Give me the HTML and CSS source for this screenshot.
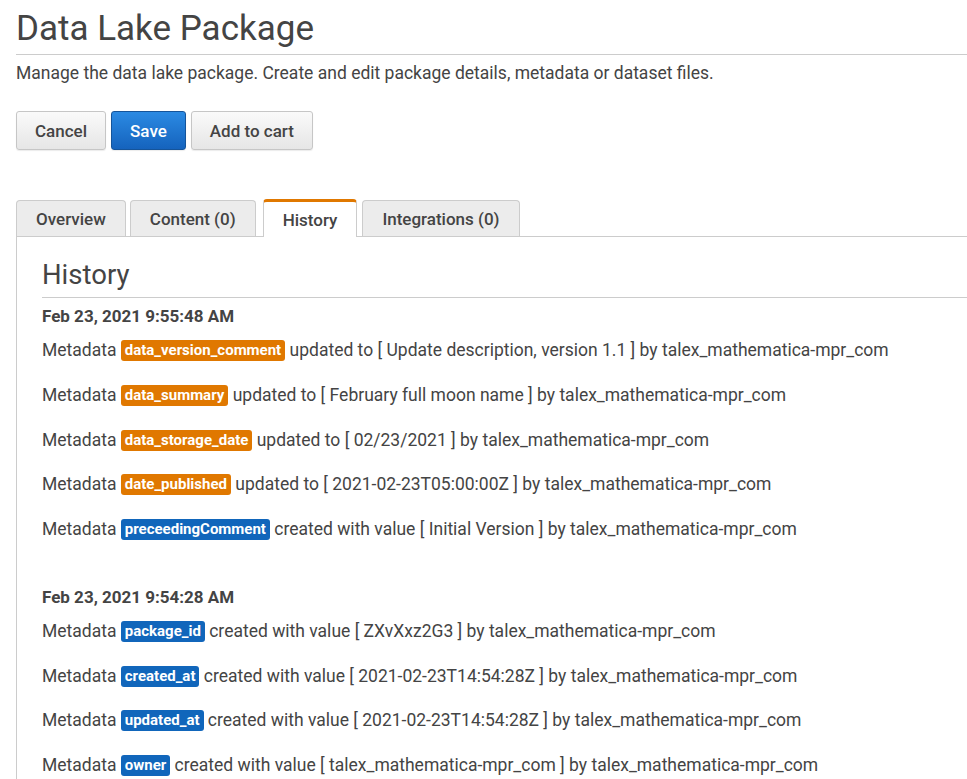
FILE: index.html
```html
<!DOCTYPE html>
<html>
<head>
<meta charset="utf-8">
<link rel="stylesheet" href="styles.css">
</head>
<body>
<div class="page">
  <h1 class="title">Data Lake Package</h1>
  <p class="subtitle">Manage the data lake package. Create and edit package details, metadata or dataset files.</p>
  <div class="actions">
    <button class="btn">Cancel</button>
    <button class="btn btn-primary">Save</button>
    <button class="btn">Add to cart</button>
  </div>
  <div class="tabs">
    <div class="tab">Overview</div>
    <div class="tab">Content (0)</div>
    <div class="tab active">History</div>
    <div class="tab">Integrations (0)</div>
  </div>
  <div class="panel">
    <h2 class="panel-title">History</h2>
    <div class="group">
      <div class="date">Feb 23, 2021 9:55:48 AM</div>
      <div class="entry">Metadata <span class="badge orange">data_version_comment</span> updated to [ Update description, version 1.1 ] by talex_mathematica-mpr_com</div>
      <div class="entry">Metadata <span class="badge orange">data_summary</span> updated to [ February full moon name ] by talex_mathematica-mpr_com</div>
      <div class="entry">Metadata <span class="badge orange">data_storage_date</span> updated to [ 02/23/2021 ] by talex_mathematica-mpr_com</div>
      <div class="entry">Metadata <span class="badge orange">date_published</span> updated to [ 2021-02-23T05:00:00Z ] by talex_mathematica-mpr_com</div>
      <div class="entry">Metadata <span class="badge blue">preceedingComment</span> created with value [ Initial Version ] by talex_mathematica-mpr_com</div>
    </div>
    <div class="group">
      <div class="date">Feb 23, 2021 9:54:28 AM</div>
      <div class="entry">Metadata <span class="badge blue">package_id</span> created with value [ ZXvXxz2G3 ] by talex_mathematica-mpr_com</div>
      <div class="entry">Metadata <span class="badge blue">created_at</span> created with value [ 2021-02-23T14:54:28Z ] by talex_mathematica-mpr_com</div>
      <div class="entry">Metadata <span class="badge blue">updated_at</span> created with value [ 2021-02-23T14:54:28Z ] by talex_mathematica-mpr_com</div>
      <div class="entry">Metadata <span class="badge blue">owner</span> created with value [ talex_mathematica-mpr_com ] by talex_mathematica-mpr_com</div>
    </div>
  </div>
</div>
</body>
</html>
```

FILE: styles.css
```css
html, body {
  margin: 0;
  padding: 0;
  background: #fff;
  overflow: hidden;
}
body {
  font-family: Roboto, "Noto Sans", sans-serif;
  color: #444;
}
.page {
  padding-left: 16px;
}
.title {
  margin: 0;
  padding-top: 7px;
  padding-bottom: 4px;
  font-size: 35px;
  line-height: 43px;
  font-weight: 400;
  color: #444;
  border-bottom: 1px solid #ccc;
}
.subtitle {
  margin: 0;
  padding-top: 5px;
  font-size: 17.5px;
  line-height: 26px;
  color: #444;
}
.actions {
  display: flex;
  gap: 5px;
  margin-top: 25px;
}
.btn {
  height: 39px;
  padding: 0 18px;
  font-family: Roboto, "Noto Sans", sans-serif;
  font-size: 17px;
  font-weight: 500;
  color: #444;
  border: 1px solid #c6c6c6;
  border-radius: 3px;
  background: linear-gradient(#fafafa, #e6e6e6);
  box-shadow: 0 1px 1px rgba(0,0,0,0.08);
}
.btn-primary {
  color: #fff;
  border-color: #15549a;
  background: linear-gradient(#2b8ae3, #1563bd);
}
.tabs {
  display: flex;
  align-items: flex-end;
  gap: 4px;
  margin-top: 48px;
  height: 38px;
}
.tab {
  height: 36px;
  box-sizing: border-box;
  padding: 0 19px;
  display: flex;
  align-items: center;
  font-size: 17px;
  font-weight: 500;
  color: #444;
  background: #ececec;
  border: 1px solid #ccc;
  border-bottom: none;
  border-radius: 4px 4px 0 0;
}
.tab.active {
  height: 38px;
  margin-left: 3px;
  margin-right: 1px;
  padding-top: 1px;
  background: #fff;
  border-top: 3px solid #e07800;
  margin-bottom: -1px;
  position: relative;
}
.panel {
  border-top: 1px solid #ccc;
  border-left: 1px solid #ccc;
  padding: 18px 0 0 25px;
}
.panel-title {
  margin: 0;
  font-size: 27.5px;
  font-weight: 400;
  line-height: 40px;
  color: #444;
  border-bottom: 1px solid #ccc;
  padding-bottom: 2px;
}
.group {
  margin-bottom: 27px;
}
.date {
  font-size: 17px;
  font-weight: 700;
  line-height: 20px;
  padding-top: 8px;
  color: #444;
}
.entry {
  font-size: 17.5px;
  line-height: 24px;
  padding: 10px 0 10.75px;
  color: #444;
  white-space: nowrap;
}
.date + .entry {
  padding-top: 12px;
}
.badge {
  display: inline-block;
  font-size: 15px;
  font-weight: 700;
  line-height: 21px;
  padding: 0 4px;
  border-radius: 3px;
  color: #fff;
  vertical-align: 1px;
}
.orange {
  background: #e07800;
}
.blue {
  background: #1166bb;
}
```
